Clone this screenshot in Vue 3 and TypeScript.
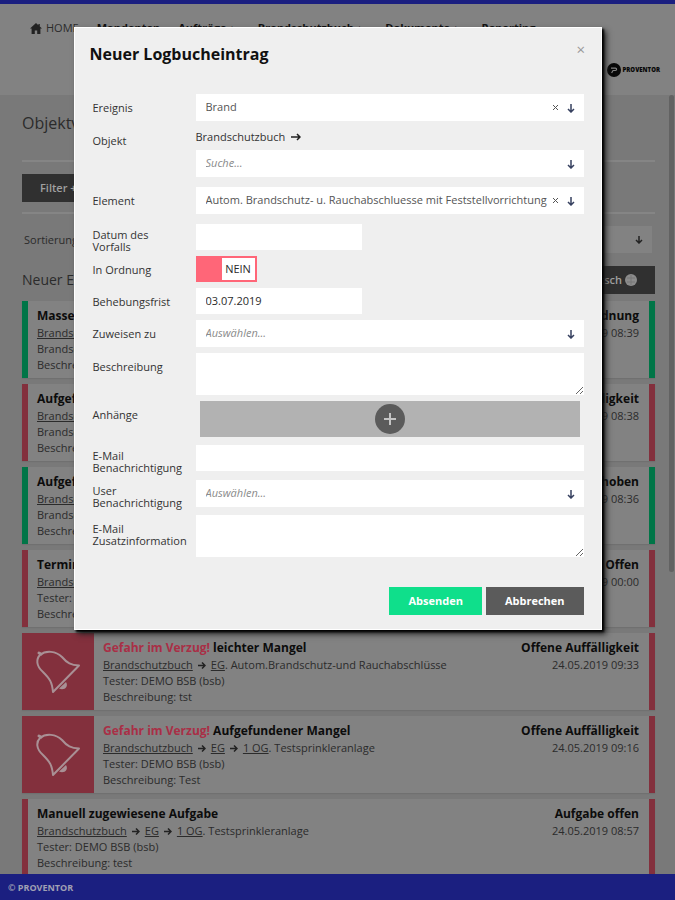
<script setup lang="ts">
import { ref } from 'vue'

interface Entry {
  tone: 'green' | 'red'
  alarm?: boolean
  title: string
  path: string[]
  place: string
  second: string
  note: string
  status: string
  time: string
}

const nav = [
  { label: 'Mandanten', menu: false },
  { label: 'Aufträge ↓', menu: true },
  { label: 'Brandschutzbuch ↓', menu: true },
  { label: 'Dokumente ↓', menu: true },
  { label: 'Reporting', menu: false },
]

const entries: Entry[] = [
  { tone: 'green', title: 'Massenprüfung', path: ['Brandschutzbuch'], place: '', second: 'Brandschutzbuch', note: 'Beschreibung:', status: 'In Ordnung', time: '24.05.2019 08:39' },
  { tone: 'red', title: 'Aufgefundener Mangel', path: ['Brandschutzbuch'], place: '', second: 'Brandschutzbuch', note: 'Beschreibung:', status: 'Offene Auffälligkeit', time: '24.05.2019 08:38' },
  { tone: 'green', title: 'Aufgefundener Mangel', path: ['Brandschutzbuch'], place: '', second: 'Brandschutzbuch', note: 'Beschreibung:', status: 'Behoben', time: '24.05.2019 08:36' },
  { tone: 'red', title: 'Termin', path: ['Brandschutzbuch'], place: '', second: 'Tester:', note: 'Beschreibung:', status: 'Offen', time: '24.05.2019 00:00' },
  { tone: 'red', alarm: true, title: 'leichter Mangel', path: ['Brandschutzbuch', 'EG'], place: 'Autom.Brandschutz-und Rauchabschlüsse', second: 'Tester: DEMO BSB (bsb)', note: 'Beschreibung: tst', status: 'Offene Auffälligkeit', time: '24.05.2019 09:33' },
  { tone: 'red', alarm: true, title: 'Aufgefundener Mangel', path: ['Brandschutzbuch', 'EG', '1 OG'], place: 'Testsprinkleranlage', second: 'Tester: DEMO BSB (bsb)', note: 'Beschreibung: Test', status: 'Offene Auffälligkeit', time: '24.05.2019 09:16' },
  { tone: 'red', title: 'Manuell zugewiesene Aufgabe', path: ['Brandschutzbuch', 'EG', '1 OG'], place: 'Testsprinkleranlage', second: 'Tester: DEMO BSB (bsb)', note: 'Beschreibung: test', status: 'Aufgabe offen', time: '24.05.2019 08:57' },
]

const ok = ref(false)
const incident = ref('')
const deadline = ref('03.07.2019')
const description = ref('')
const mail = ref('')
const mailInfo = ref('')
</script>

<template>
  <div class="app">
    <div class="page">
      <header class="top">
        <nav class="nav">
          <a href="#" class="home">
            <svg width="12" height="11" viewBox="0 0 12 11"><path d="M6 0 0 5.6h1.6V11h3.2V7.4h2.4V11h3.2V5.6H12L9.8 3.5V1H8.4v1.2z" fill="#222" /></svg>HOME</a>
          <a v-for="n in nav" :key="n.label" href="#" :class="{ menu: n.menu }">{{ n.label }}</a>
        </nav>
        <div class="brand">
          <svg width="14" height="14" viewBox="0 0 14 14"><circle cx="7" cy="7" r="7" fill="#080808" /><path d="M4 5.2h4.4c1.6 0 1.6 2.3 0 2.3H6L4.6 10" fill="none" stroke="#828282" stroke-width="1.2" /></svg>
          <span>PROVENTOR</span>
        </div>
      </header>

      <main class="content">
        <h1>Objektverwaltung</h1>
        <div class="filter"><button type="button">Filter +</button></div>
        <div class="sort">
          <label for="sort">Sortierung</label>
          <div class="pick dim">
            <select id="sort"><option></option></select>
            <svg class="arrow" width="8" height="8" viewBox="0 0 8 8"><path d="M4 0v7M1 4l3 3 3-3" /></svg>
          </div>
        </div>
        <div class="bar">
          <h2>Neuer Eintrag</h2>
          <button type="button">Logbuch deutsch
            <svg width="12" height="12" viewBox="0 0 12 12"><circle cx="6" cy="6" r="6" fill="#8c8c8c" /><path d="M2 4h8M2 8h8M6 1v10" stroke="#777" fill="none" /></svg>
          </button>
        </div>

        <article v-for="(e, i) in entries" :key="i" class="card" :class="[e.tone, { alarm: e.alarm }]">
          <div v-if="e.alarm" class="bell">
            <svg width="46" height="46" viewBox="0 0 46 46" fill="none" stroke="#a99095" stroke-width="2" stroke-linejoin="round" stroke-linecap="round">
              <path d="M5 6C11 1 21 2 27 8c5 6 9 8 17 8.500L18 43C17 33 15 30 8 23 1 17 1 10 5 6z" />
              <path d="M6 5 4 4" stroke-width="3" />
              <path d="M24 39.500 31 33c3 5-2 9-7 6.500z" fill="#a99095" stroke="none" />
            </svg>
          </div>
          <div class="info">
            <h3><span v-if="e.alarm" class="danger">Gefahr im Verzug!</span> {{ e.title }}</h3>
            <p>
              <template v-for="(p, k) in e.path" :key="p">
                <svg v-if="k" class="step" width="8" height="7" viewBox="0 0 8 7"><path d="M0 3.500h7M4 .5l3 3-3 3" /></svg>
                <a href="#">{{ p }}</a>
              </template><template v-if="e.place">. {{ e.place }}</template>
            </p>
            <p>{{ e.second }}</p>
            <p>{{ e.note }}</p>
          </div>
          <div class="state">
            <h3>{{ e.status }}</h3>
            <p>{{ e.time }}</p>
          </div>
        </article>
      </main>
      <div class="scroll"></div>
      <footer>© PROVENTOR</footer>
    </div>

    <div class="layer">
      <section class="dialog" role="dialog" aria-labelledby="dlg">
        <div class="head">
          <h2 id="dlg">Neuer Logbucheintrag</h2>
          <button type="button" class="close">×</button>
        </div>
        <form @submit.prevent>
          <div class="row">
            <label for="event">Ereignis</label>
            <div class="pick">
              <select id="event"><option>Brand</option></select>
              <button type="button" class="clear"><svg width="7" height="7" viewBox="0 0 7 7"><path d="M1 1l5 5M6 1 1 6" /></svg></button>
              <svg class="arrow" width="8" height="9" viewBox="0 0 8 9"><path d="M4 0v8M1 5l3 3 3-3" /></svg>
            </div>
          </div>
          <div class="row far">
            <label for="object">Objekt</label>
            <div>
              <p class="crumb">Brandschutzbuch
                <svg width="10" height="8" viewBox="0 0 10 8"><path d="M0 4h9M6 1l3 3-3 3" /></svg>
              </p>
              <div class="pick empty">
                <select id="object"><option>Suche...</option></select>
                <svg class="arrow" width="8" height="9" viewBox="0 0 8 9"><path d="M4 0v8M1 5l3 3 3-3" /></svg>
              </div>
            </div>
          </div>
          <div class="row far">
            <label for="element">Element</label>
            <div class="pick">
              <select id="element"><option>Autom. Brandschutz- u. Rauchabschluesse mit Feststellvorrichtung</option></select>
              <button type="button" class="clear"><svg width="7" height="7" viewBox="0 0 7 7"><path d="M1 1l5 5M6 1 1 6" /></svg></button>
              <svg class="arrow" width="8" height="9" viewBox="0 0 8 9"><path d="M4 0v8M1 5l3 3 3-3" /></svg>
            </div>
          </div>
          <div class="row near">
            <label for="date" class="two">Datum des<br />Vorfalls</label>
            <input id="date" v-model="incident" type="text" class="short" />
          </div>
          <div class="row">
            <label for="ok">In Ordnung</label>
            <label class="toggle" for="ok">
              <input id="ok" v-model="ok" type="checkbox" /><span>{{ ok ? 'JA' : 'NEIN' }}</span>
            </label>
          </div>
          <div class="row">
            <label for="deadline">Behebungsfrist</label>
            <input id="deadline" v-model="deadline" type="text" class="short" />
          </div>
          <div class="row">
            <label for="assign">Zuweisen zu</label>
            <div class="pick empty">
              <select id="assign"><option>Auswählen...</option></select>
              <svg class="arrow" width="8" height="9" viewBox="0 0 8 9"><path d="M4 0v8M1 5l3 3 3-3" /></svg>
            </div>
          </div>
          <div class="row">
            <label for="desc">Beschreibung</label>
            <textarea id="desc" v-model="description"></textarea>
          </div>
          <div class="row">
            <label for="files">Anhänge</label>
            <button id="files" type="button" class="drop">
              <svg width="30" height="30" viewBox="0 0 30 30"><circle cx="15" cy="15" r="15" fill="#5b5b5b" /><path d="M15 9v12M9 15h12" stroke="#c4c4c4" stroke-width="2" /></svg>
            </button>
          </div>
          <div class="row">
            <label for="mail" class="two">E-Mail<br />Benachrichtigung</label>
            <input id="mail" v-model="mail" type="text" />
          </div>
          <div class="row">
            <label for="user" class="two">User<br />Benachrichtigung</label>
            <div class="pick empty">
              <select id="user"><option>Auswählen...</option></select>
              <svg class="arrow" width="8" height="9" viewBox="0 0 8 9"><path d="M4 0v8M1 5l3 3 3-3" /></svg>
            </div>
          </div>
          <div class="row">
            <label for="mailinfo">E-Mail<br />Zusatzinformation</label>
            <textarea id="mailinfo" v-model="mailInfo"></textarea>
          </div>
          <div class="actions">
            <button type="submit" class="send">Absenden</button>
            <button type="button" class="cancel">Abbrechen</button>
          </div>
        </form>
      </section>
    </div>
  </div>
</template>

<style>
body {
  margin: 0;
  background: #797979;
}
</style>

<style scoped>
* {
  box-sizing: border-box;
}
.app {
  position: relative;
  height: 100vh;
  overflow: hidden;
  font: 11px/16px "Open Sans", "Noto Sans", sans-serif;
  color: #2b2b2b;
}
h1, h2, h3, p {
  margin: 0;
}
button, input, select, textarea {
  font: inherit;
  color: inherit;
  border: 0;
  border-radius: 0;
  margin: 0;
  outline: 0;
}
a {
  color: inherit;
}
.page {
  height: 100%;
  overflow: hidden;
  background: #797979;
}
.top {
  height: 95px;
  border-top: 4px solid #1b1f80;
  background: #828282;
  padding: 16px 15px 0 30px;
}
.nav {
  display: flex;
  gap: 18px;
  font-weight: 700;
  color: #111;
  white-space: nowrap;
}
.nav a {
  text-decoration: none;
}
.nav .menu {
  padding-right: 5px;
}
.nav .home {
  display: flex;
  align-items: center;
  gap: 4px;
  font-weight: 400;
  color: #2b2b2b;
}
.brand {
  display: flex;
  justify-content: flex-end;
  align-items: center;
  gap: 2px;
  margin-top: 27px;
  font: 900 6px/14px "Open Sans", sans-serif;
  color: #080808;
}
.content {
  padding: 18px 20px 0 22px;
}
h1 {
  font-weight: 400;
  font-size: 16px;
  line-height: 20px;
}
.filter {
  margin-top: 27px;
  padding: 12px 0 10px;
  border-top: 2px solid #858585;
  border-bottom: 2px solid #858585;
}
.filter button, .bar button {
  display: flex;
  align-items: center;
  gap: 3px;
  height: 28px;
  padding: 0 18px;
  background: #303030;
  color: #a0a0a0;
  font-weight: 600;
}
.sort {
  display: flex;
  align-items: center;
  justify-content: space-between;
  margin: 12px 3px 13px 2px;
}
.sort .pick {
  width: 60%;
}
.bar {
  display: flex;
  align-items: center;
  justify-content: space-between;
  margin-bottom: 7px;
}
.bar h2 {
  font-weight: 400;
  font-size: 14px;
}
.card {
  display: flex;
  height: 77px;
  margin-bottom: 6px;
  border-right: 6px solid #83303d;
  border-left: 6px solid #83303d;
  background: #828282;
  box-shadow: 0 1px 1px #707070;
}
.green {
  border-color: #007547;
}
.alarm {
  border-left: 0;
}
.bell {
  flex: 0 0 72px;
  display: grid;
  place-items: center;
  background: #83303d;
}
.info {
  flex: 1;
  padding: 6px 9px 0;
  white-space: nowrap;
}
.state {
  padding: 6px 10px 0 0;
  text-align: right;
}
h3 {
  font-size: 12px;
  line-height: 18px;
  font-weight: 700;
  color: #0c0c0c;
}
.danger {
  color: #a92f46;
}
.step {
  margin: 0 5px;
}
.step path, .crumb path {
  fill: none;
  stroke: #222;
  stroke-width: 1.5;
}
.scroll {
  position: absolute;
  right: 1px;
  top: 95px;
  width: 5px;
  height: 53%;
  border-radius: 3px;
  background: #626262;
}
footer {
  position: absolute;
  inset: auto 0 0;
  height: 26px;
  padding-left: 8px;
  background: #1b1f80;
  color: #a0a0b4;
  font: 700 9px/28px "Open Sans", sans-serif;
}
.layer {
  position: absolute;
  inset: 0;
  padding: 27px 24px 0;
}
.dialog {
  max-width: 528px;
  margin: 0 auto;
  padding: 15px 16px 14px 15px;
  border: 1px solid #fff;
  background: #efefef;
  box-shadow: 2px 2px 2px #000, 4px 4px 6px #222;
}
.head {
  display: flex;
  justify-content: space-between;
  height: 51px;
}
.head h2 {
  font-size: 16px;
  line-height: 22px;
  font-weight: 700;
  color: #111;
}
.close {
  align-self: flex-start;
  width: 8px;
  padding: 0;
  background: none;
  color: #999;
  font-size: 15px;
  line-height: 12px;
}
form {
  padding: 0 1px 0 3px;
}
.row {
  display: grid;
  grid-template-columns: 103px minmax(0, 1fr);
  align-items: start;
  margin-bottom: 6px;
}
.near {
  margin-bottom: 3px;
}
.far {
  margin-bottom: 10px;
}
.row > label:first-child {
  padding-top: 8px;
  line-height: 12px;
  color: #333;
}
.row > label.two:first-child {
  padding-top: 5px;
}
.pick {
  position: relative;
}
.pick select {
  display: block;
  appearance: none;
  width: 100%;
  height: 27px;
  padding: 0 22px 2px 10px;
  background: #fff;
  color: #555;
}
.pick.empty select {
  color: #8a8a8a;
  font-style: italic;
}
.pick.dim select {
  background: #828282;
}
.arrow {
  position: absolute;
  right: 9px;
  top: 10px;
}
.arrow path {
  fill: none;
  stroke: #36405f;
  stroke-width: 1.5;
}
.dim .arrow path {
  stroke: #222;
}
.clear {
  position: absolute;
  right: 25px;
  top: 10px;
  display: flex;
  padding: 0;
  background: none;
}
.clear path {
  stroke: #555;
}
.crumb {
  padding-bottom: 3px;
  line-height: 20px;
  color: #333;
}
.crumb svg {
  margin-left: 3px;
}
.row > input {
  width: 100%;
  height: 26px;
  padding: 0 10px 2px;
  background: #fff;
}
.row > input.short {
  width: 43%;
}
textarea {
  display: block;
  width: 100%;
  height: 42px;
  padding: 6px 10px;
  background: #fff;
  resize: vertical;
}
.toggle {
  display: flex;
  justify-content: flex-end;
  width: 61px;
  height: 26px;
  padding: 2px;
  background: #ff6678;
}
.toggle input {
  appearance: none;
  flex: 1;
}
.toggle span {
  width: 33px;
  background: #fff;
  text-align: center;
  line-height: 22px;
}
.drop {
  display: grid;
  place-items: center;
  height: 36px;
  margin: 0 4px 2px;
  padding: 0;
  background: #b2b2b2;
}
.actions {
  display: flex;
  justify-content: flex-end;
  gap: 4px;
  margin-top: 30px;
}
.actions button {
  height: 28px;
  padding: 0 19px;
  color: #fff;
  font-weight: 700;
}
.send {
  background: #0fdf8b;
}
.actions .cancel {
  background: #5b5b5b;
}
</style>
